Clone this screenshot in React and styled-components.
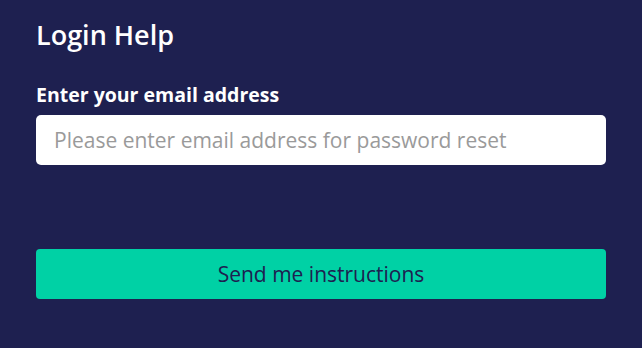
import React from 'react'
import styled, { createGlobalStyle } from 'styled-components'

const GlobalStyle = createGlobalStyle`
  html, body {
    margin: 0;
    padding: 0;
    background: #1e2050;
    font-family: "Open Sans", "Noto Sans", sans-serif;
  }
`

const Panel = styled.div`
  width: 642px;
  height: 348px;
  box-sizing: border-box;
  padding: 16px 36px 0;
  background: #1e2050;
  display: flex;
  flex-direction: column;
`

const Title = styled.h1`
  margin: 0;
  font-size: 27px;
  line-height: 38px;
  font-weight: 600;
  color: #fff;
`

const Label = styled.label`
  margin-top: 28px;
  font-size: 19.5px;
  line-height: 26px;
  font-weight: 700;
  color: #fff;
`

const Input = styled.input`
  margin-top: 7px;
  height: 50px;
  box-sizing: border-box;
  border: none;
  border-radius: 5px;
  padding: 0 18px;
  font-family: inherit;
  font-size: 21px;
  color: #333;
  background: #fff;
  outline: none;

  &::placeholder {
    color: #9a9a9a;
  }
`

const Button = styled.button`
  margin-top: 84px;
  height: 50px;
  border: none;
  border-radius: 4px;
  background: #00d1a5;
  color: #1e2050;
  font-family: inherit;
  font-size: 21px;
  cursor: pointer;
`

export default function App() {
  return <>
    <GlobalStyle />
    <Panel>
      <Title>Login Help</Title>
      <Label htmlFor='email'>Enter your email address</Label>
      <Input id='email' type='email' placeholder='Please enter email address for password reset' />
      <Button>Send me instructions</Button>
    </Panel>
  </>
}
